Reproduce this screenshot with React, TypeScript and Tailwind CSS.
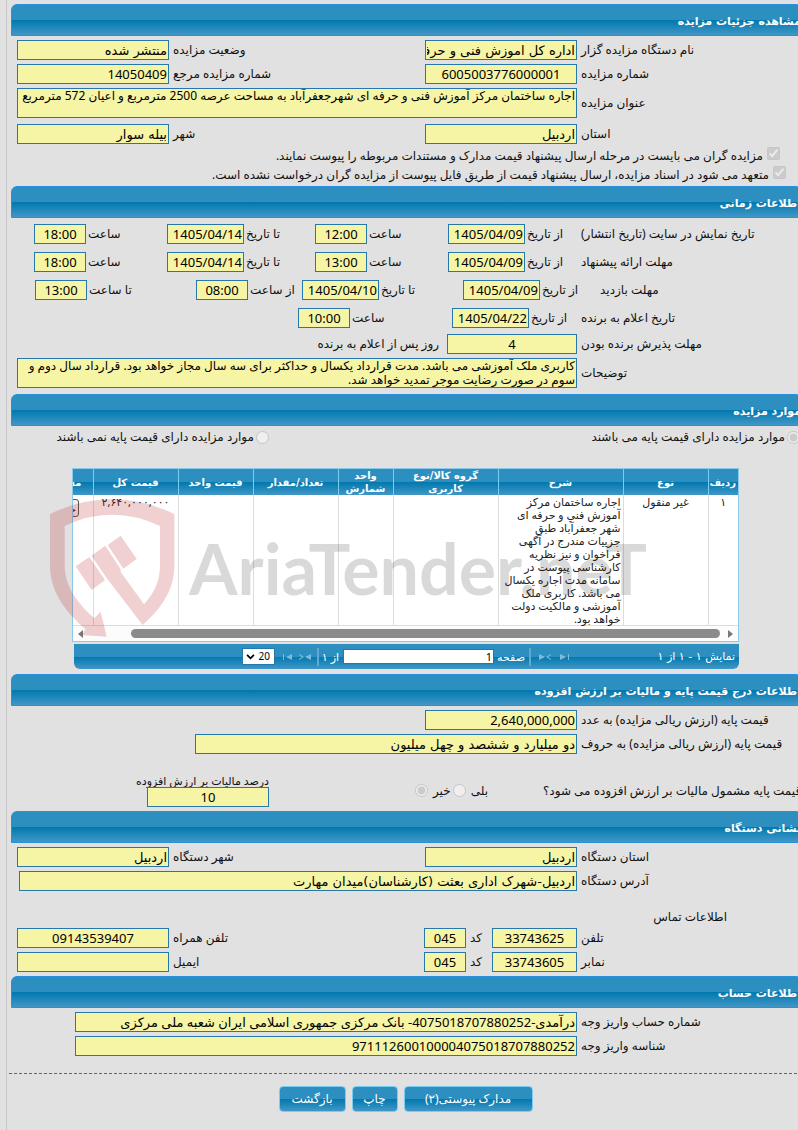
import { ReactNode, useId } from "react";

const bar = "bg-[linear-gradient(to_bottom,#2d8fbf_0%,#2d8fbf_50%,#0078ae_50%,#4197c6_100%)]";
const box =
  "h-5 border border-[#2678ab] bg-[#f6f4a5] px-px text-[13px] leading-[18px] text-black rounded-none outline-none";

function Section({ title, children }: { title: string; children: ReactNode }) {
  return (
    <section>
      <h2
        className={`${bar} -mr-1 flex h-8 items-center rounded-t-md border border-[#2a8fdc] pt-[3px] font-['DejaVu_Sans',sans-serif] text-[11px] font-bold text-white`}
      >
        {title}
      </h2>
      {children}
    </section>
  );
}

type FieldProps = {
  label: string;
  value: string;
  labelClass: string;
  inputClass: string;
  gap?: string;
};

function Field({ label, value, labelClass, inputClass, gap = "pl-1" }: FieldProps) {
  const id = useId();
  const font = /\d/.test(value) ? "font-['Noto_Sans','DejaVu_Sans',sans-serif]" : "font-['DejaVu_Sans',sans-serif]";
  return (
    <>
      <label htmlFor={id} className={`${labelClass} ${gap} shrink-0 whitespace-nowrap text-left`}>
        {label}
      </label>
      <input id={id} readOnly value={value} className={`${box} ${font} ${inputClass}`} />
    </>
  );
}

function Area({ label, value }: { label: string; value: string }) {
  const id = useId();
  return (
    <div className="flex items-center">
      <label htmlFor={id} className="w-[221px] shrink-0 pl-1 text-left">
        {label}
      </label>
      <textarea
        id={id}
        readOnly
        value={value}
        className="block h-[30px] min-w-0 flex-1 resize-none overflow-hidden rounded-none border border-[#2678ab] bg-[#f6f4a5] px-px text-xs leading-[14px] text-black outline-none"
      />
    </div>
  );
}

function Row({ children }: { children: ReactNode }) {
  return <div className="flex h-5 items-center">{children}</div>;
}

const main = "w-[221px]";
const date = "w-[77px] shrink-0";
const time = "w-[52px] shrink-0 text-center";

/* ستون‌های جدول */
const columns = [
  { name: "ردیف", width: "w-[30px]" },
  { name: "نوع", width: "w-[85px]" },
  { name: "شرح", width: "w-[125px]" },
  { name: "گروه کالا/نوع کاربری", width: "w-[105px]" },
  { name: "واحد شمارش", width: "w-[55px]" },
  { name: "تعداد/مقدار", width: "w-[85px]" },
  { name: "قیمت واحد", width: "w-[75px]" },
  { name: "قیمت کل", width: "w-[85px]" },
  { name: "مستندات", width: "w-[67px]" },
];

const cell = "border-l border-[#dcdcdc] px-0.5 py-0 align-top";

function Watermark() {
  return (
    <div aria-hidden="true" className="pointer-events-none absolute top-[29px] left-[36px] flex h-[145px] items-center" dir="ltr">
      <svg className="h-[145px] w-[130px] shrink-0" viewBox="141 171 390 435" fill="#b5121b" fillOpacity="0.2">
        <path
          fillRule="evenodd"
          d="M150 222 Q240 178 336 178 Q432 178 523 222 V375 C523 445 490 500 428 555 L322 417 L274 347 L316 317 L362 388 L362 396 L432 493 C466 455 480 420 480 375 V258 Q410 224 336 224 Q262 224 194 258 V375 C194 435 226 483 283 535 L302 515 L320 590 L245 585 L257 568 C190 510 150 450 150 375 Z"
        />
        <path d="M227 379 L268 351 L315 420 L275 450 Z M323 315 L362 287 L410 357 L370 386 Z" />
      </svg>
      <span className="mb-1 ml-3 whitespace-nowrap font-['Lato','Roboto',sans-serif] text-[70px] leading-none font-bold text-black/15">
        AriaTender.neT
      </span>
    </div>
  );
}

function PagerIcon({ label, d }: { label: string; d: string }) {
  return (
    <button type="button" aria-label={label} className="flex size-4 shrink-0 items-center justify-center">
      <svg viewBox="0 0 12 8" className="h-2 w-3" fill="#7dbbdc">
        <path d={d} />
      </svg>
    </button>
  );
}

function ItemsTable() {
  return (
    <div className="mt-5 mr-[59px] ml-[61px]">
      <div className="overflow-hidden border border-[#8cc8e8] bg-white">
        <table className="w-[712px] table-fixed border-collapse text-[11px] leading-[13px]">
          <thead>
            <tr className={`${bar} h-[26px]`}>
              {columns.map((c) => (
                <th
                  key={c.name}
                  className={`${c.width} border-l border-[#79cdf0] px-0.5 py-0 font-['DejaVu_Sans',sans-serif] text-[10px] font-bold text-white`}
                >
                  {c.name}
                </th>
              ))}
            </tr>
          </thead>
          <tbody>
            <tr className="border-b border-[#dcdcdc] text-[#222]">
              <td className={`${cell} text-center`}>۱</td>
              <td className={`${cell} text-center`}>غیر منقول</td>
              <td className={cell}>
                اجاره ساختمان مرکز
                <br />
                آموزش فني و حرفه ای
                <br />
                شهر جعفرآباد طبق
                <br />
                جزییات مندرج در آگهی
                <br />
                فراخوان و نیز نظریه
                <br />
                کارشناسی پیوست در
                <br />
                سامانه مدت اجاره یکسال
                <br />
                می باشد. کاربری ملک
                <br />
                آموزشی و مالکیت دولت
                <br />
                خواهد بود.
              </td>
              <td className={cell} />
              <td className={cell} />
              <td className={cell} />
              <td className={cell} />
              <td className={`${cell} text-center`}>۲,۶۴۰,۰۰۰,۰۰۰</td>
              <td className={`${cell} text-center`}>
                <button type="button" className="mt-1 h-[18px] rounded-[3px] border border-[#555] bg-[#efefef] px-0.5 text-[11px]">
                  جزئیات
                </button>
              </td>
            </tr>
          </tbody>
        </table>
        {/* نوار پیمایش افقی */}
        <div className="flex h-[15px] items-center justify-between bg-[#fcfcfc] px-[5px]">
          <svg viewBox="0 0 5 8" className="h-2 w-[5px]" fill="#777">
            <path d="M0 0 L5 4 L0 8 Z" />
          </svg>
          <div className="mr-2 ml-12 h-[9px] flex-1 rounded-full bg-[#8b8b8b]" />
          <svg viewBox="0 0 5 8" className="h-2 w-[5px]" fill="#777">
            <path d="M5 0 L0 4 L5 8 Z" />
          </svg>
        </div>
      </div>
      <div className={`${bar} mt-0.5 ml-0.5 flex h-[25px] items-center rounded-b-md pr-1 text-[11px] text-white`}>
        <span className="w-[162px] font-['DejaVu_Sans',sans-serif]">نمایش ۱ - ۱ از ۱</span>
        <PagerIcon label="صفحه اول" d="M1 1 L7 4 L1 7 Z M9 1 H10 V7 H9 Z" />
        <span className="w-1" />
        <PagerIcon label="صفحه قبل" d="M0 1 L6 4 L0 7 Z M12 1 L7 4 L12 7 V6 L9 4 L12 2 Z" />
        <span className="mr-1.5 ml-1 h-[18px] w-0.5 bg-[#5fa9d0]" />
        <label htmlFor="page" className="w-[31px]">
          صفحه
        </label>
        <input id="page" defaultValue="1" className="h-[15px] w-[151px] border border-[#2678ab] bg-white px-px text-[11px] text-black" />
        <span className="w-[20px] pr-1 whitespace-nowrap">از ۱</span>
        <span className="mx-1 h-[18px] w-0.5 bg-[#5fa9d0]" />
        <PagerIcon label="صفحه بعد" d="M12 1 L6 4 L12 7 Z M0 1 L5 4 L0 7 V6 L3 4 L0 2 Z" />
        <span className="w-0.5" />
        <PagerIcon label="صفحه آخر" d="M11 1 L5 4 L11 7 Z M2 1 H3 V7 H2 Z" />
        <span className="relative mr-1 flex">
          <select aria-label="تعداد در صفحه" className="h-[17px] w-[33px] appearance-none border border-[#2678ab] bg-white pr-1 text-[10px] leading-[13px] text-black">
            <option>20</option>
          </select>
          <svg viewBox="0 0 10 7" className="pointer-events-none absolute top-[6px] left-1 h-[6px] w-[9px]" fill="none" stroke="#000" strokeWidth="2">
            <path d="M1 1 L5 5 L9 1" />
          </svg>
        </span>
      </div>
    </div>
  );
}

export default function App() {
  return (
    <div
      dir="rtl"
      className="min-h-screen overflow-hidden bg-[#e1e1e1] pl-1.5 font-['Noto_Sans','DejaVu_Sans',sans-serif] text-xs leading-4 text-[#111]"
    >
      <main className="min-h-screen border-l border-[#c8c8c8] pt-1 pl-1">
        <Section title="مشاهده جزئیات مزایده">
          <div className="mt-1 flex flex-col gap-1 pl-1.5">
            <Row>
              <Field label="نام دستگاه مزایده گزار" value="اداره کل اموزش فنی و حرفه ای استان اردبیل" labelClass={main} inputClass="w-[152px]" />
              <Field label="وضعیت مزایده" value="منتشر شده" labelClass="flex-1" inputClass="w-[152px]" />
            </Row>
            <Row>
              <Field label="شماره مزایده" value="6005003776000001" labelClass={main} inputClass="w-[152px] text-center" />
              <Field label="شماره مزایده مرجع" value="14050409" labelClass="flex-1" inputClass="w-[152px]" />
            </Row>
            <Area
              label="عنوان مزایده"
              value="اجاره ساختمان مرکز آموزش فنی و حرفه ای شهرجعفرآباد به مساحت عرصه 2500 مترمربع و اعیان 572 مترمربع"
            />
            <div className="mt-0.5 flex items-center">
              <Field label="استان" value="اردبیل" labelClass={main} inputClass="w-[152px]" />
              <Field label="شهر" value="بیله سوار" labelClass="flex-1" inputClass="w-[152px]" />
            </div>
          </div>
          <div className="mt-0.5 flex flex-col pb-0.5">
            <label className="flex h-[19px] items-center gap-1 pr-[18px]">
              <input type="checkbox" checked disabled readOnly className="mb-1 size-[13px]" />
              مزایده گران می بایست در مرحله ارسال پیشنهاد قیمت مدارک و مستندات مربوطه را پیوست نمایند.
            </label>
            <label className="flex h-[19px] items-center gap-1 pr-3">
              <input type="checkbox" checked disabled readOnly className="mb-1 size-[13px]" />
              متعهد می شود در اسناد مزایده، ارسال پیشنهاد قیمت از طریق فایل پیوست از مزایده گران درخواست نشده است.
            </label>
          </div>
        </Section>

        <Section title="اطلاعات زمانی">
          <div className="flex flex-col gap-2 pt-1.5">
            <Row>
              <span className="w-[217px] text-left">تاریخ نمایش در سایت (تاریخ انتشار)</span>
              <Field label="از تاریخ" value="1405/04/09" labelClass="w-14" inputClass={date} gap="pl-0.5" />
              <Field label="ساعت" value="12:00" labelClass="w-[81px]" inputClass={time} gap="pl-0.5" />
              <Field label="تا تاریخ" value="1405/04/14" labelClass="w-[71px]" inputClass={date} gap="pl-0.5" />
              <Field label="ساعت" value="18:00" labelClass="w-[81px]" inputClass={time} gap="pl-0.5" />
            </Row>
            <Row>
              <span className="w-[217px] text-left">مهلت ارائه پیشنهاد</span>
              <Field label="از تاریخ" value="1405/04/09" labelClass="w-14" inputClass={date} gap="pl-0.5" />
              <Field label="ساعت" value="13:00" labelClass="w-[81px]" inputClass={time} gap="pl-0.5" />
              <Field label="تا تاریخ" value="1405/04/14" labelClass="w-[71px]" inputClass={date} gap="pl-0.5" />
              <Field label="ساعت" value="18:00" labelClass="w-[81px]" inputClass={time} gap="pl-0.5" />
            </Row>
            <Row>
              <span className="w-[198px] text-left">مهلت بازدید</span>
              <Field label="از تاریخ" value="1405/04/09" labelClass="w-[60px]" inputClass={date} gap="pl-0.5" />
              <Field label="تا تاریخ" value="1405/04/10" labelClass="w-[84px]" inputClass={date} gap="pl-0.5" />
              <Field label="از ساعت" value="08:00" labelClass="w-[54px]" inputClass={time} gap="pl-0.5" />
              <Field label="تا ساعت" value="13:00" labelClass="w-[109px]" inputClass={time} gap="pl-0.5" />
            </Row>
            <Row>
              <span className="w-[217px] text-left">تاریخ اعلام به برنده</span>
              <Field label="از تاریخ" value="1405/04/22" labelClass="w-[52px]" inputClass={date} gap="pl-0.5" />
              <Field label="ساعت" value="10:00" labelClass="w-[102px]" inputClass={time} gap="pl-0.5" />
            </Row>
          </div>
          <div className="flex flex-col gap-1 pt-1.5 pb-1.5 pl-1.5">
            <Row>
              <Field label="مهلت پذیرش برنده بودن" value="4" labelClass={main} inputClass="w-[130px] text-center" />
              <span className="pr-2">روز پس از اعلام به برنده</span>
            </Row>
            <Area
              label="توضیحات"
              value="کاربری ملک آموزشی می باشد. مدت قرارداد یکسال و حداکثر برای سه سال مجاز خواهد بود. قرارداد سال دوم و سوم در صورت رضایت موجر تمدید خواهد شد."
            />
          </div>
        </Section>

        <Section title="موارد مزایده">
          <div className="relative pb-[5px]">
            <div className="flex h-[22px] items-center">
              <label className="-mr-0.5 flex flex-1 items-center gap-0.5">
                <input type="radio" name="base" checked disabled readOnly className="size-[13px]" />
                موارد مزایده دارای قیمت پایه می باشند
              </label>
              <label className="flex w-[258px] items-center gap-0.5">
                <input type="radio" name="base" disabled className="size-[13px]" />
                موارد مزایده دارای قیمت پایه نمی باشند
              </label>
            </div>
            <ItemsTable />
            <div className="absolute inset-x-0 top-[42px]" dir="ltr">
              <Watermark />
            </div>
          </div>
        </Section>

        <Section title="اطلاعات درج قیمت پایه و مالیات بر ارزش افزوده">
          <div className="mt-1 flex flex-col gap-1">
            <Row>
              <Field label="قیمت پایه (ارزش ریالی مزایده) به عدد" value="2,640,000,000" labelClass={main} inputClass="w-[152px]" />
            </Row>
            <Row>
              <Field label="قیمت پایه (ارزش ریالی مزایده) به حروف" value="دو میلیارد و ششصد و چهل میلیون" labelClass={main} inputClass="w-[382px]" />
            </Row>
          </div>
          <div className="mt-5 mb-1 flex h-[33px] items-center">
            <span className="-mr-2 w-[263px] text-left whitespace-nowrap">قیمت پایه مشمول مالیات بر ارزش افزوده می شود؟</span>
            <div className="flex flex-1 items-center pr-[55px]">
              <label className="flex items-center gap-[5px]">
                بلی
                <input type="radio" name="vat" disabled className="size-[13px]" />
              </label>
              <label className="mr-0.5 flex items-center gap-[5px]">
                خیر
                <input type="radio" name="vat" checked disabled readOnly className="size-[13px]" />
              </label>
            </div>
            <div className="flex w-[258px] flex-col">
              <label htmlFor="vat-rate" className="text-[11px] leading-[13px]">
                درصد مالیات بر ارزش افزوده
              </label>
              <input id="vat-rate" readOnly value="10" className={`${box} w-[122px] text-center`} />
            </div>
          </div>
        </Section>

        <Section title="نشانی دستگاه">
          <div className="mt-1 flex flex-col gap-1 pb-1 pl-1.5">
            <Row>
              <Field label="استان دستگاه" value="اردبیل" labelClass={main} inputClass="w-[152px]" />
              <Field label="شهر دستگاه" value="اردبیل" labelClass="flex-1" inputClass="w-[152px]" />
            </Row>
            <Row>
              <Field label="آدرس دستگاه" value="اردبیل-شهرک اداری بعثت (کارشناسان)میدان مهارت" labelClass={main} inputClass="ml-0.5 min-w-0 flex-1" />
            </Row>
            <h3 className="mt-3 h-[17px] pr-[71px] leading-[19px]">اطلاعات تماس</h3>
            <Row>
              <Field label="تلفن" value="33743625" labelClass={main} inputClass="w-[85px] text-center" />
              <Field label="کد" value="045" labelClass="w-[26px]" inputClass="w-[42px] text-center" />
              <Field label="تلفن همراه" value="09143539407" labelClass="flex-1" inputClass="w-[152px] text-center" />
            </Row>
            <Row>
              <Field label="نمابر" value="33743605" labelClass={main} inputClass="w-[85px] text-center" />
              <Field label="کد" value="045" labelClass="w-[26px]" inputClass="w-[42px] text-center" />
              <Field label="ایمیل" value="" labelClass="flex-1" inputClass="w-[152px]" />
            </Row>
          </div>
        </Section>

        <Section title="اطلاعات حساب">
          <div className="mt-1 flex flex-col gap-1 pl-16">
            <Row>
              <Field
                label="شماره حساب واریز وجه"
                value="درآمدی-4075018707880252- بانک مرکزی جمهوری اسلامی ایران شعبه ملی مرکزی"
                labelClass={main}
                inputClass="min-w-0 flex-1"
              />
            </Row>
            <Row>
              <Field label="شناسه واریز وجه" value="971112600100004075018707880252" labelClass={main} inputClass="min-w-0 flex-1" />
            </Row>
          </div>
        </Section>

        {/* دکمه‌ها */}
        <div className="mt-[17px] -mr-1 -ml-0.5 flex justify-center gap-1.5 border-t border-dashed border-[#2678ab] pt-3">
          <button type="button" className={`${bar} h-[26px] w-[129px] rounded-[4px] border border-[#79cdf0] text-white`}>
            مدارک پیوستی(۲)
          </button>
          <button type="button" className={`${bar} h-[26px] w-[46px] rounded-[4px] border border-[#79cdf0] text-white`}>
            چاپ
          </button>
          <button type="button" className={`${bar} h-[26px] w-[67px] rounded-[4px] border border-[#79cdf0] text-white`}>
            بازگشت
          </button>
        </div>
      </main>
    </div>
  );
}
